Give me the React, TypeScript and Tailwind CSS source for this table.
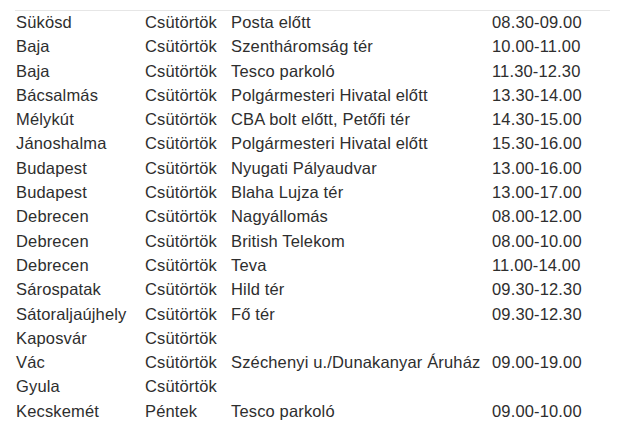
const rows: [string, string, string, string][] = [
  ["Sükösd", "Csütörtök", "Posta előtt", "08.30-09.00"],
  ["Baja", "Csütörtök", "Szentháromság tér", "10.00-11.00"],
  ["Baja", "Csütörtök", "Tesco parkoló", "11.30-12.30"],
  ["Bácsalmás", "Csütörtök", "Polgármesteri Hivatal előtt", "13.30-14.00"],
  ["Mélykút", "Csütörtök", "CBA bolt előtt, Petőfi tér", "14.30-15.00"],
  ["Jánoshalma", "Csütörtök", "Polgármesteri Hivatal előtt", "15.30-16.00"],
  ["Budapest", "Csütörtök", "Nyugati Pályaudvar", "13.00-16.00"],
  ["Budapest", "Csütörtök", "Blaha Lujza tér", "13.00-17.00"],
  ["Debrecen", "Csütörtök", "Nagyállomás", "08.00-12.00"],
  ["Debrecen", "Csütörtök", "British Telekom", "08.00-10.00"],
  ["Debrecen", "Csütörtök", "Teva", "11.00-14.00"],
  ["Sárospatak", "Csütörtök", "Hild tér", "09.30-12.30"],
  ["Sátoraljaújhely", "Csütörtök", "Fő tér", "09.30-12.30"],
  ["Kaposvár", "Csütörtök", "", ""],
  ["Vác", "Csütörtök", "Széchenyi u./Dunakanyar Áruház", "09.00-19.00"],
  ["Gyula", "Csütörtök", "", ""],
  ["Kecskemét", "Péntek", "Tesco parkoló", "09.00-10.00"],
];

export default function App() {
  return (
    <div className="w-[644px] h-[426px] bg-white overflow-hidden pt-[10px] pl-[15px] font-['Liberation_Sans',Arial,sans-serif] text-[16.5px] tracking-[0.15px] text-[#2e2e2e]">
      <div className="w-[595px] border-t border-[#e6e6e6]">
        {rows.map((r, i) => (
          <div
            key={i}
            className="grid grid-cols-[129px_86px_261px_1fr] h-[24.3px] leading-[22.3px] whitespace-nowrap"
          >
            <div className="pl-[1px]">{r[0]}</div>
            <div className="pl-[1px]">{r[1]}</div>
            <div className="pl-[1px]">{r[2]}</div>
            <div className="pl-[1px]">{r[3]}</div>
          </div>
        ))}
      </div>
    </div>
  );
}
